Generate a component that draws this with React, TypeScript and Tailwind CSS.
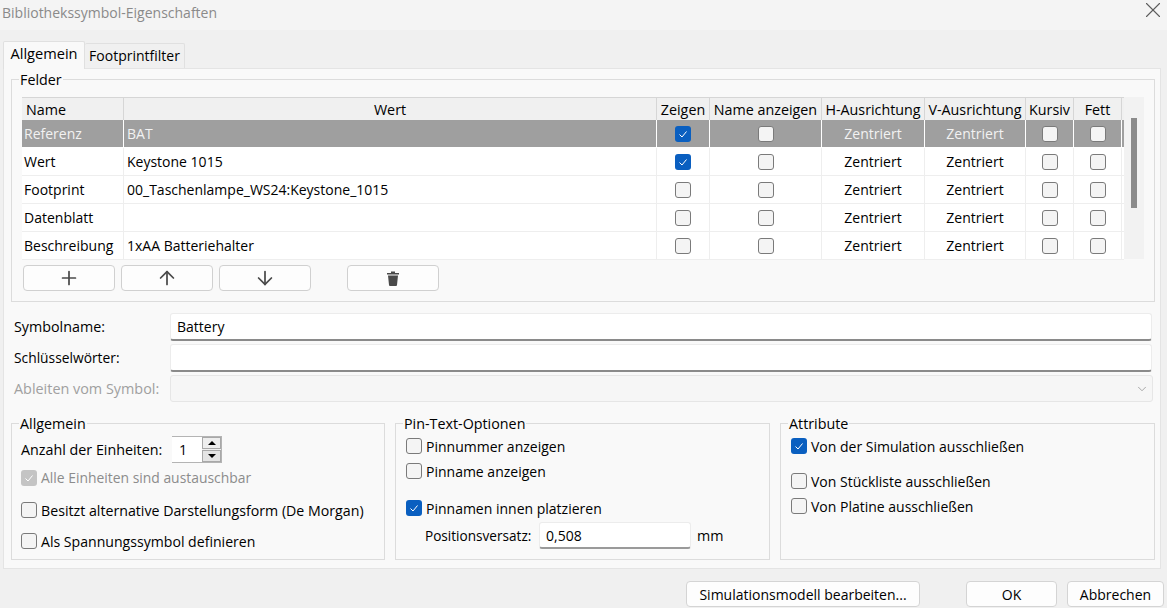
import React from 'react';
import { Plus, ArrowUp, ArrowDown, X, ChevronDown } from 'lucide-react';

const rows = [
  { name: 'Referenz', value: 'BAT', show: true, selected: true },
  { name: 'Wert', value: 'Keystone 1015', show: true },
  { name: 'Footprint', value: '00_Taschenlampe_WS24:Keystone_1015', show: false },
  { name: 'Datenblatt', value: '', show: false },
  { name: 'Beschreibung', value: '1xAA Batteriehalter', show: false },
];

const cols = 'grid grid-cols-[102px_533px_53px_112px_103px_101px_48px_48px]';

const CheckMark = () => (
  <svg width="10" height="10" viewBox="0 0 10 10" fill="none" stroke="#ffffff" strokeWidth="1">
    <path d="M1.5 5.5 L4 8 L8.5 2.5" />
  </svg>
);

const Check: React.FC<{ checked?: boolean; disabled?: boolean }> = ({ checked, disabled }) => {
  if (disabled) {
    return (
      <span className="flex h-4 w-4 shrink-0 items-center justify-center rounded-[3px] bg-[#c4c4c4]">
        <CheckMark />
      </span>
    );
  }
  if (checked) {
    return (
      <span className="flex h-4 w-4 shrink-0 items-center justify-center rounded-[3px] bg-[#0a5fc0]">
        <CheckMark />
      </span>
    );
  }
  return <span className="block h-4 w-4 shrink-0 rounded-[3px] border border-[#7a7a7a] bg-[#f4f4f4]" />;
};

const Option: React.FC<{ label: string; checked?: boolean; disabled?: boolean; nudge?: boolean; className?: string }> = ({ label, checked, disabled, nudge, className }) => (
  <div className={`flex h-4 items-center gap-1 whitespace-nowrap ${disabled ? 'text-[#8c8c8c]' : ''} ${className ?? 'text-[14px]'}`}>
    <Check checked={checked} disabled={disabled} />
    <span className={nudge ? 'translate-y-px' : ''}>{label}</span>
  </div>
);

const Group: React.FC<{ title: string; className?: string; children: React.ReactNode }> = ({ title, className, children }) => (
  <div className={`relative border border-[#dcdcdc] ${className ?? ''}`}>
    <span className="absolute -top-[9px] left-[7px] bg-[#f9f9f9] px-px leading-[18px]">{title}</span>
    {children}
  </div>
);

const ToolButton: React.FC<{ children: React.ReactNode; className?: string }> = ({ children, className }) => (
  <button className={`flex h-[26px] w-[92px] items-center justify-center rounded-[4px] border border-[#d0d0d0] bg-[#fdfdfd] pr-px text-[#4a4a4a] ${className ?? ''}`}>
    {children}
  </button>
);

const FooterButton: React.FC<{ children: React.ReactNode; className?: string }> = ({ children, className }) => (
  <button className={`h-[26px] rounded-[4px] border border-[#d4d4d4] bg-[#fdfdfd] ${className ?? ''}`}>{children}</button>
);

export default function App() {
  return (
    <div className="h-[608px] w-[1167px] overflow-hidden bg-[#f0f0f0] text-[14.3px] text-black [font-family:'Open_Sans',sans-serif]">
      {/* title bar */}
      <div className="flex h-[30px] items-center justify-between bg-[#f4f4f4] pb-[6px] pl-[2px] pr-px text-[14px] text-[#8a8a8a]">
        <span>Bibliothekssymbol-Eigenschaften</span>
        <X size={26} strokeWidth={1} className="-mt-[4px] text-[#5c5c5c]" />
      </div>

      {/* tabs */}
      <div className="ml-[3px] mt-[11px] flex h-[27px] items-end">
        <div className="relative z-10 flex h-[28px] w-[82px] translate-y-px items-center justify-center rounded-t-[2px] border border-b-0 border-[#e0e0e0] bg-[#f9f9f9] pb-[3px] text-[14.6px]">Allgemein</div>
        <div className="flex h-[25px] w-[100px] items-center justify-center rounded-t-[2px] border border-b-0 border-l-0 border-[#e0e0e0] bg-[#f0f0f0] pb-[1px] text-[14px]">Footprintfilter</div>
      </div>

      <div className="ml-[3px] h-[501px] w-[1158px] border border-[#e4e4e4] bg-[#f9f9f9] pl-[7px] pt-[10px]">
        {/* Felder */}
        <Group title="Felder" className="h-[223px] w-[1144px] pl-[10px] pt-[17px]">
          <div className="flex">
            <div className="w-[1102px]">
              <div className={`${cols} h-[23px] border-t border-[#d6d6d6] bg-[#f0f0f0] leading-[23px]`}>
                {['Name', 'Wert', 'Zeigen', 'Name anzeigen', 'H-Ausrichtung', 'V-Ausrichtung', 'Kursiv', 'Fett'].map((h, i) => (
                  <div key={h} className={`whitespace-nowrap border-r border-[#d6d6d6] ${i === 0 ? 'pl-[4px]' : 'text-center'}`}>{h}</div>
                ))}
              </div>
              {rows.map((r) => {
                const cell = `flex items-center border-r ${r.selected ? 'border-white' : 'border-[#eeeeee]'}`;
                return (
                  <div key={r.name} className={`${cols} h-[28px] border-b text-[14px] ${r.selected ? 'border-white bg-[#9f9f9f] text-[#f2f2f2]' : 'border-[#eeeeee] bg-white'}`}>
                    <div className={`${cell} pl-[2px]`}>{r.name}</div>
                    <div className={`${cell} pl-[3px]`}>{r.value}</div>
                    <div className={`${cell} justify-center`}><Check checked={r.show} /></div>
                    <div className={`${cell} justify-center`}><Check /></div>
                    <div className={`${cell} justify-center`}>Zentriert</div>
                    <div className={`${cell} justify-center`}>Zentriert</div>
                    <div className={`${cell} justify-center`}><Check /></div>
                    <div className={`${cell} justify-center`}><Check /></div>
                  </div>
                );
              })}
            </div>
            <div className="h-[162px] w-[20px] bg-[#f2f2f2] pl-[7px] pt-[21px]">
              <div className="h-[90px] w-[6px] bg-[#8b8b8b]" />
            </div>
          </div>
          <div className="ml-px mt-[5px] flex gap-[6px]">
            <ToolButton><Plus size={22} strokeWidth={1.9} /></ToolButton>
            <ToolButton><ArrowUp size={22} strokeWidth={1.9} /></ToolButton>
            <ToolButton><ArrowDown size={22} strokeWidth={1.9} /></ToolButton>
            <ToolButton className="ml-[30px]">
              <svg width="12" height="15" viewBox="0 0 12 15" fill="#4a4a4a">
                <path d="M4 0.5 H8 V2 H12 V3.5 H0 V2 H4 Z" />
                <path d="M1 4.5 H11 L10 14 Q10 15 9 15 H3 Q2 15 2 14 Z" />
              </svg>
            </ToolButton>
          </div>
        </Group>

        {/* Symbol fields */}
        <div className="mt-[11px] flex flex-col gap-[3px] pl-[2px]">
          <div className="flex items-center">
            <span className="w-[157px] whitespace-nowrap pl-px">Symbolname:</span>
            <div className="flex h-[28px] w-[982px] items-center rounded-[3px] border border-b-2 border-[#ececec] border-b-[#8a8a8a] bg-white pl-[6px] text-[14px]">Battery</div>
          </div>
          <div className="flex items-center">
            <span className="w-[157px] whitespace-nowrap pl-px text-[13.8px]">Schlüsselwörter:</span>
            <div className="h-[28px] w-[982px] rounded-[3px] border border-b-2 border-[#ececec] border-b-[#8a8a8a] bg-white" />
          </div>
          <div className="flex items-center text-[#a0a0a0]">
            <span className="w-[157px] whitespace-nowrap pl-px text-[14.4px]">Ableiten vom Symbol:</span>
            <div className="flex h-[27px] w-[983px] items-center justify-end rounded-[3px] border border-[#e6e6e6] bg-[#f6f6f6] pr-[3px]">
              <ChevronDown size={14} strokeWidth={1.25} className="text-[#8a8a8a]" />
            </div>
          </div>
        </div>

        {/* Option groups */}
        <div className="mt-[21px] flex gap-[10px]">
          <Group title="Allgemein" className="h-[137px] w-[374px] pl-[9px] pt-[12px]">
            <div className="flex h-[27px] items-center">
              <span className="w-[151px] whitespace-nowrap">Anzahl der Einheiten:</span>
              <div className="flex h-[27px] w-[50px] items-center border border-l-0 border-[#b4b4b4] bg-white pl-[7px]">
                <span className="flex-1">1</span>
                <div className="flex h-[25px] w-[19px] flex-col gap-px bg-[#f0f0f0]">
                  <div className="flex flex-1 items-center justify-center border border-[#a8a8a8] bg-[#eeeeee]"><span className="h-0 w-0 border-x-[4px] border-b-[4px] border-x-transparent border-b-black" /></div>
                  <div className="flex flex-1 items-center justify-center border border-[#a8a8a8] bg-[#e4e4e4]"><span className="h-0 w-0 border-x-[4px] border-t-[4px] border-x-transparent border-t-black" /></div>
                </div>
              </div>
            </div>
            <Option className="mt-[7px] text-[13.9px]" label="Alle Einheiten sind austauschbar" checked disabled />
            <Option className="mt-[16px] text-[14.2px]" label="Besitzt alternative Darstellungsform (De Morgan)" nudge />
            <Option className="mt-[15px] text-[14.1px]" label="Als Spannungssymbol definieren" nudge />
          </Group>

          <Group title="Pin-Text-Optionen" className="h-[137px] w-[375px] pl-[10px] pt-[14px]">
            <Option label="Pinnummer anzeigen" />
            <Option className="mt-[9px] text-[14px]" label="Pinname anzeigen" />
            <Option className="mt-[21px] text-[14px]" label="Pinnamen innen platzieren" checked />
            <div className="mt-[6px] flex h-[27px] items-center pl-[19px]">
              <span className="w-[114px] translate-y-px whitespace-nowrap text-[13.6px]">Positionsversatz:</span>
              <div className="flex h-[27px] w-[152px] items-center rounded-[3px] border border-b-2 border-[#ececec] border-b-[#9a9a9a] bg-white pl-[6px] text-[14px]">0,508</div>
              <span className="ml-[6px]">mm</span>
            </div>
          </Group>

          <Group title="Attribute" className="h-[137px] w-[375px] pl-[10px] pt-[14px]">
            <Option label="Von der Simulation ausschließen" checked />
            <Option className="mt-[19px] text-[14px]" label="Von Stückliste ausschließen" />
            <Option className="mt-[9px] text-[14px]" label="Von Platine ausschließen" />
          </Group>
        </div>
      </div>

      {/* footer */}
      <div className="mt-[12px] flex pl-[686px] text-[14px]">
        <FooterButton className="w-[234px]">Simulationsmodell bearbeiten...</FooterButton>
        <FooterButton className="ml-[46px] w-[91px]">OK</FooterButton>
        <FooterButton className="ml-[10px] w-[97px]">Abbrechen</FooterButton>
      </div>
    </div>
  );
}
